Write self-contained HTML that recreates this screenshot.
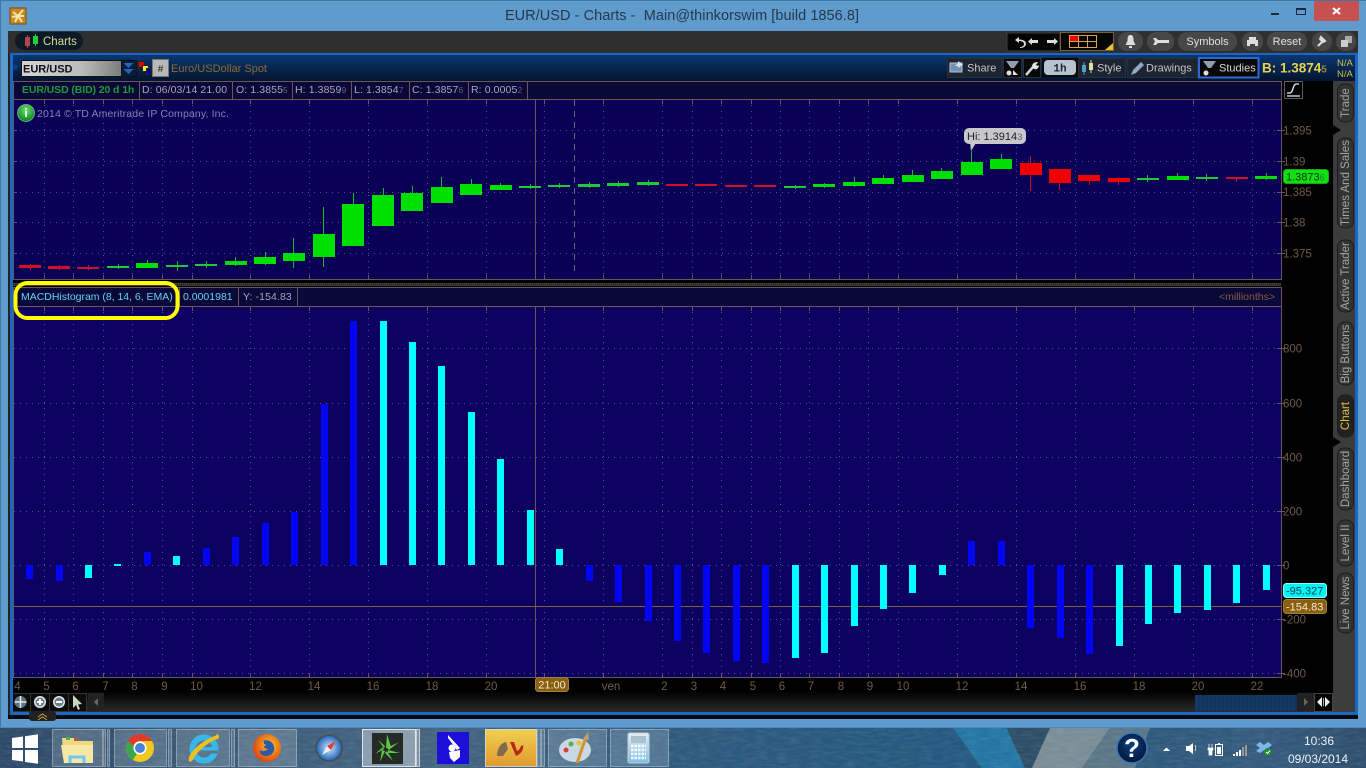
<!DOCTYPE html>
<html lang="en"><head><meta charset="utf-8"><title>EUR/USD - Charts</title>
<style>
html,body{margin:0;padding:0;background:#5f9bcd;overflow:hidden;width:1366px;height:768px}
svg{display:block;font-family:"Liberation Sans",sans-serif}
text{white-space:pre}
.ax{fill:#6e5a4a;font-size:11.5px}
.lg{fill:#a8a4c0;font-size:10.5px;letter-spacing:.1px}
.dim{fill:#66627e}
.tab{fill:#a6a6a6;font-size:11.5px;text-anchor:middle}
.b{fill:#0404f4}.c{fill:#00ffff}
.g{fill:#00e000}.gt{fill:#22c83a}.r{fill:#f00000}.rt{fill:#d01028}
.gw{stroke:#1cb828;stroke-width:1;fill:none}.rw{stroke:#c81020;stroke-width:1;fill:none}
.pill{fill:#474747}
.tbtn{fill:#fff;fill-opacity:.17;stroke:#fff;stroke-opacity:.35}
</style></head><body>
<svg width="1366" height="768" viewBox="0 0 1366 768" xmlns="http://www.w3.org/2000/svg">
<defs>
<linearGradient id="hdr" x1="0" y1="0" x2="0" y2="1"><stop offset="0" stop-color="#0b3a78"/><stop offset="1" stop-color="#04142e"/></linearGradient>
<linearGradient id="bot" x1="0" y1="0" x2="0" y2="1"><stop offset="0" stop-color="#000"/><stop offset=".35" stop-color="#000"/><stop offset="1" stop-color="#2c2c2c"/></linearGradient>
<linearGradient id="sym" x1="0" y1="0" x2="1" y2="0"><stop offset="0" stop-color="#d4d4d4"/><stop offset=".6" stop-color="#bcbcbc"/><stop offset="1" stop-color="#7c7c7c"/></linearGradient>
<linearGradient id="tbar" x1="0" y1="0" x2="1" y2="0"><stop offset="0" stop-color="#2c4a68"/><stop offset=".22" stop-color="#3e5f7c"/><stop offset=".32" stop-color="#45647e"/><stop offset=".48" stop-color="#2f5a7e"/><stop offset=".7" stop-color="#24597f"/><stop offset=".93" stop-color="#345a7c"/><stop offset="1" stop-color="#2d4d6c"/></linearGradient>
<linearGradient id="yel" x1="0" y1="0" x2="0" y2="1"><stop offset="0" stop-color="#f0cf50"/><stop offset="1" stop-color="#e09a30"/></linearGradient>
<linearGradient id="cal" x1="0" y1="0" x2="0" y2="1"><stop offset="0" stop-color="#e8eef2"/><stop offset="1" stop-color="#7cc0e8"/></linearGradient>
<radialGradient id="help" cx=".5" cy=".4" r=".6"><stop offset="0" stop-color="#0a3f80"/><stop offset="1" stop-color="#04153a"/></radialGradient>
<radialGradient id="inf" cx=".5" cy=".35" r=".6"><stop offset="0" stop-color="#70e070"/><stop offset="1" stop-color="#0a8a20"/></radialGradient>
<radialGradient id="ff" cx=".6" cy=".4" r=".6"><stop offset="0" stop-color="#f8c030"/><stop offset="1" stop-color="#e04a10"/></radialGradient>
<radialGradient id="saf" cx=".5" cy=".5" r=".5"><stop offset="0" stop-color="#d0e4f8"/><stop offset="1" stop-color="#2a6ec0"/></radialGradient>
<filter id="noise" x="0" y="0" width="100%" height="100%"><feTurbulence type="fractalNoise" baseFrequency=".09 .35" numOctaves="3" seed="4"/><feColorMatrix values="0 0 0 0 1  0 0 0 0 1  0 0 0 0 1  1.6 0 0 0 -.55"/></filter>
</defs>

<!-- window frame -->
<rect width="1366" height="768" fill="#5f9bcd"/>
<rect width="1366" height="1" fill="#3f78a8"/>
<rect y="0" width="1" height="728" fill="#3f78a8"/>
<rect x="10" y="8" width="16" height="16" fill="#c8882a" stroke="#7a4a10"/>
<path d="M18 16L13 12M18 16L23 10M18 16L24 16M18 16L22 22M18 16L15 22M18 16L12 17" stroke="#f8e8a0" stroke-width="2"/>
<text x="682" y="20" text-anchor="middle" font-size="14.5" fill="#25384c" letter-spacing=".05">EUR/USD - Charts -  Main@thinkorswim [build 1856.8]</text>
<rect x="1271" y="13" width="8" height="2" fill="#1a2a3a"/>
<rect x="1296.500" y="8.500" width="9" height="6" fill="none" stroke="#1a2a3a"/><rect x="1296" y="8" width="10" height="2" fill="#1a2a3a"/>
<rect x="1314" y="1" width="45" height="20" fill="#c75050"/>
<path d="M1333 8L1340 14M1340 8L1333 14" stroke="#fff" stroke-width="2"/>

<!-- app body -->
<rect x="8" y="31" width="1350" height="688" fill="#000"/>
<rect x="8" y="31" width="1350" height="22" fill="#2f2f2f"/>

<!-- charts pill -->
<rect x="15" y="32" width="68" height="18" rx="9" fill="#0c1a26"/>
<rect x="25" y="37" width="5" height="9" fill="#b04848"/><path d="M27.500 35V48" stroke="#b04848"/>
<rect x="33" y="36" width="5" height="8" fill="#20d040"/><path d="M35.500 34V46" stroke="#20d040"/>
<text x="43" y="45" font-size="11.5" fill="#d4d890">Charts</text>

<!-- top right toolbar -->
<rect x="1007" y="33" width="53" height="18" fill="#050505" stroke="#3a3a3a"/>
<path d="M1019 37l-4 3 4 3v-2c3 0 5 1 5 3s-2 3-4 3v1c4 0 6-2 6-4.500s-3-4-7-4z" fill="#ddd"/>
<path d="M1028 41.500l4-3.500v7z" fill="#ddd"/><rect x="1031" y="40" width="7" height="3" fill="#ddd"/>
<rect x="1047" y="40" width="7" height="3" fill="#ddd"/><path d="M1058 41.500l-4-3.500v7z" fill="#ddd"/>
<rect x="1060.500" y="32.500" width="53" height="18" fill="#050505" stroke="#7a6030"/>
<rect x="1069.500" y="35.500" width="9" height="6" fill="#f00000" stroke="#d8a050"/>
<path d="M1069.500 35.500h27v12h-27zM1078.500 35.500v12M1087.500 35.500v12M1069.500 41.500h27" fill="none" stroke="#d8a050"/>
<path d="M1113 43v7h-8z" fill="#f0c030"/>
<rect class="pill" x="1118" y="32" width="25" height="19" rx="9"/>
<path d="M1130.500 35c-3 0-3 3-3 6l-2 4h10l-2-4c0-3 0-6-3-6z" fill="#ddd"/><rect x="1129" y="46" width="3" height="2" fill="#ddd"/>
<rect class="pill" x="1147" y="32" width="27" height="19" rx="9"/>
<path d="M1153 38h3l2 2h11v3h-11l-2 2h-3l2-3.500z" fill="#ddd"/>
<rect class="pill" x="1178" y="32" width="59" height="19" rx="9"/>
<text x="1207.500" y="45" text-anchor="middle" font-size="11" fill="#e0e0e0">Symbols</text>
<rect class="pill" x="1242" y="32" width="21" height="19" rx="9"/>
<path d="M1249 37h7v3h2v6h-3v-2h-5v2h-3v-6h2z" fill="#ddd"/>
<rect class="pill" x="1267" y="32" width="40" height="19" rx="9"/>
<text x="1287" y="45" text-anchor="middle" font-size="11" fill="#e0e0e0">Reset</text>
<rect class="pill" x="1312" y="32" width="20" height="19" rx="9"/>
<path d="M1318 46l4-4M1321 37l4 4-2 1-3-3z" stroke="#ddd" stroke-width="2" fill="#ddd"/>
<rect class="pill" x="1336" y="32" width="20" height="19" rx="9"/>
<rect x="1345" y="36" width="7" height="7" fill="#aaa"/><rect x="1341" y="40" width="7" height="7" fill="#ccc"/>

<!-- header row -->
<rect x="10" y="53" width="1345" height="28" fill="url(#hdr)"/>
<rect x="10" y="53" width="1345" height="2" fill="#1a68c4"/>
<circle cx="15" cy="67" r="3" fill="#123a78"/>
<rect x="21.500" y="60.500" width="100" height="16" fill="url(#sym)" stroke="#111"/>
<text x="23" y="72.500" font-size="11" font-weight="bold" fill="#101018">EUR/USD</text>
<rect x="121.500" y="60.500" width="15" height="16" fill="#0c1c36" stroke="#111"/>
<path d="M123.500 63h10l-5 5zM123.500 69h10l-5 5z" fill="#2464c4"/>
<rect x="138.500" y="61.500" width="6" height="6" fill="#e00000" stroke="#222"/><rect x="142.500" y="65.500" width="6" height="6" fill="#f8e840" stroke="#222"/><rect x="146.500" y="68.500" width="5" height="6" fill="#0a0a90" stroke="#222"/>
<rect x="152.500" y="59.500" width="16" height="17" fill="#b8b8b8" stroke="#777"/>
<text x="160.500" y="72" text-anchor="middle" font-size="10" fill="#222">#</text>
<text x="171" y="72" font-size="11" fill="#8a6c30">Euro/USDollar Spot</text>

<rect x="947.500" y="58.500" width="54" height="19" fill="#1b2430" stroke="#2a2f38"/>
<rect x="950" y="63" width="12" height="9" fill="#7090b8" stroke="#b0c4d8"/><path d="M955 66l3-3v-2l5 3.500-5 3.500v-2h-3z" fill="#d8e0e8"/>
<text x="967" y="71.500" font-size="11" fill="#c4c4c4">Share</text>
<rect x="1003.500" y="58.500" width="18" height="19" fill="#080808" stroke="#2a2f38"/>
<path d="M1006 61h13l-5 7h-3z" fill="#8ea0b0"/><circle cx="1009" cy="73" r="2.500" fill="#e0e0e0"/><path d="M1013 70l5 5h-5z" fill="#e0e0e0"/>
<rect x="1023.500" y="58.500" width="17" height="19" fill="#080808" stroke="#2a2f38"/>
<path d="M1026 75l7-8" stroke="#c8d4de" stroke-width="2.500"/><path d="M1032 67c0-4 3-5 6-5l-2 3 2 1 1-1c0 3-2 5-5 4z" fill="#e4e4e4"/>
<rect x="1042" y="58" width="36" height="19" fill="#0a0a0a"/>
<rect x="1044" y="60" width="32" height="15" rx="4" fill="#b6c4cf"/>
<text x="1060" y="71.500" text-anchor="middle" font-size="11" font-weight="bold" fill="#20242a" font-family="Liberation Mono">1h</text>
<rect x="1078.500" y="58.500" width="47" height="19" fill="#1b2430" stroke="#2a2f38"/>
<rect x="1082" y="65" width="4" height="7" fill="#5a9cc8"/><path d="M1084 62v13" stroke="#5a9cc8"/><rect x="1089" y="63" width="4" height="7" fill="#e0e0a0"/><path d="M1091 60v13" stroke="#e0e0a0"/>
<text x="1097" y="71.500" font-size="11" fill="#c4c4c4">Style</text>
<rect x="1127.500" y="58.500" width="70" height="19" fill="#1b2430" stroke="#2a2f38"/>
<path d="M1131 75l2-5 8-8 3 3-8 8z" fill="#90a8c0"/>
<text x="1146" y="71.500" font-size="11" fill="#c4c4c4">Drawings</text>
<rect x="1199" y="58" width="59.500" height="19.500" fill="#080808" stroke="#2a6ad0" stroke-width="2"/>
<path d="M1203 61h13l-5 7h-3z" fill="#8ea0b0"/><circle cx="1206" cy="73" r="2.500" fill="#e0e0e0"/>
<text x="1219" y="71.500" font-size="11" fill="#d4d4d4">Studies</text>
<text x="1262" y="72.500" font-size="13.500" font-weight="bold" fill="#e8d050">B: 1.3874<tspan font-size="10" fill="#9a8a40">5</tspan></text>
<text x="1337" y="66" font-size="9.500" fill="#d4c040">N/A</text><text x="1337" y="77" font-size="9.500" fill="#d4c040">N/A</text>

<!-- top panel -->
<rect x="13" y="81" width="1268" height="199" fill="#0a0056"/>
<rect x="13" y="81" width="1268" height="19" fill="#0a0838"/>
<path d="M13.500 81.500H1281.500V279.500H13.500ZM13.500 99.500H1281.500M139.500 81V99M232.500 81V99M292.500 81V99M351.500 81V99M409.500 81V99M468.500 81V99M527.500 81V99" fill="none" stroke="#6c5458"/>
<text x="22" y="93" font-size="10.500" font-weight="bold" fill="#1f9a3c" letter-spacing="-.1">EUR/USD (BID) 20 d 1h</text>
<text class="lg" x="142" y="93">D: 06/03/14 21.00</text>
<text class="lg" x="236" y="93">O: 1.3855<tspan class="dim" font-size="8.500">5</tspan></text>
<text class="lg" x="295" y="93">H: 1.3859<tspan class="dim" font-size="8.500">9</tspan></text>
<text class="lg" x="354" y="93">L: 1.3854<tspan class="dim" font-size="8.500">7</tspan></text>
<text class="lg" x="412" y="93">C: 1.3857<tspan class="dim" font-size="8.500">6</tspan></text>
<text class="lg" x="471" y="93">R: 0.0005<tspan class="dim" font-size="8.500">2</tspan></text>
<!-- grids top -->
<path d="M44.500 105V275M73.500 105V275M103.500 105V275M132.500 105V275M162.500 105V275M192.500 105V275M250.500 105V275M309.500 105V275M368.500 105V275M427.500 105V275M486.500 105V275M544.500 105V275M603.500 105V275M662.500 105V275M692.500 105V275M721.500 105V275M751.500 105V275M780.500 105V275M809.500 105V275M839.500 105V275M868.500 105V275M898.500 105V275M957.500 105V275M1016.500 105V275M1075.500 105V275M1134.500 105V275M1193.500 105V275M1252.500 105V275" stroke="#5c5080" stroke-dasharray="1 5" fill="none"/>
<path d="M14 130.500H1281M14 161.500H1281M14 192.500H1281M14 222.500H1281M14 253.500H1281" stroke="#5c5080" stroke-dasharray="1 5" fill="none"/>
<path d="M44.500 100v4M73.500 100v4M103.500 100v4M132.500 100v4M162.500 100v4M192.500 100v4M250.500 100v4M309.500 100v4M368.500 100v4M427.500 100v4M486.500 100v4M544.500 100v4M603.500 100v4M662.500 100v4M692.500 100v4M721.500 100v4M751.500 100v4M780.500 100v4M809.500 100v4M839.500 100v4M868.500 100v4M898.500 100v4M957.500 100v4M1016.500 100v4M1075.500 100v4M1134.500 100v4M1193.500 100v4M1252.500 100v4M44.500 275v4M73.500 275v4M103.500 275v4M132.500 275v4M162.500 275v4M192.500 275v4M250.500 275v4M309.500 275v4M368.500 275v4M427.500 275v4M486.500 275v4M544.500 275v4M603.500 275v4M662.500 275v4M692.500 275v4M721.500 275v4M751.500 275v4M780.500 275v4M809.500 275v4M839.500 275v4M868.500 275v4M898.500 275v4M957.500 275v4M1016.500 275v4M1075.500 275v4M1134.500 275v4M1193.500 275v4M1252.500 275v4M13 130.500h4M13 161.500h4M13 192.500h4M13 222.500h4M13 253.500h4M1277 130.500h8M1277 161.500h8M1277 192.500h8M1277 222.500h8M1277 253.500h8" stroke="#6c5458" fill="none"/>
<path d="M535.500 100V279" stroke="#6c5458"/>
<path d="M574.500 100V275" stroke="#6a6a80" stroke-dasharray="6 5"/>
<circle cx="26" cy="113" r="8.500" fill="url(#inf)" stroke="#d8f0d8" stroke-opacity=".5"/>
<text x="26" y="117" text-anchor="middle" font-size="12" font-weight="bold" fill="#fff">i</text>
<text x="37" y="117" font-size="10.500" fill="#8484b4" letter-spacing=".14">2014 © TD Ameritrade IP Company, Inc.</text>
<!-- candles -->
<path class="rw" d="M30.500 264V270M59.500 265V270M88.500 265V270"/>
<rect class="rt" x="19" y="265" width="22" height="3"/><rect class="rt" x="48" y="266" width="22" height="3"/><rect class="rt" x="77" y="267" width="22" height="2"/>
<path class="gw" d="M118.500 264V269M147.500 260V268M177.500 261V271M206.500 261V268M235.500 257V266M265.500 252V265M293.500 238V268M323.500 207V267M353.500 193V246M383.500 188V226M412.500 186V211M441.500 177V203M471.500 179V195M500.500 183V190M530.500 184V189M559.500 183V188M589.500 182V188M618.500 181V187M648.500 180V186M795.500 185V189M824.500 183V188M854.500 177V187M883.500 175V184M912.500 170V182M941.500 168V179M971.500 151V175M1001.500 154V169M1147.500 175V182M1177.500 173V180M1206.500 174V181M1266.500 173V180"/>
<rect class="gt" x="107" y="266" width="22" height="2"/><rect class="g" x="136" y="263" width="22" height="5"/>
<rect class="gt" x="166" y="265" width="22" height="2"/><rect class="gt" x="195" y="264" width="22" height="2"/>
<rect class="g" x="225" y="261" width="22" height="4"/><rect class="g" x="254" y="257" width="22" height="7"/>
<rect class="g" x="283" y="253" width="22" height="8"/><rect class="g" x="313" y="234" width="22" height="23"/>
<rect class="g" x="342" y="204" width="22" height="42"/><rect class="g" x="372" y="195" width="22" height="31"/>
<rect class="g" x="401" y="193" width="22" height="18"/><rect class="g" x="431" y="187" width="22" height="16"/>
<rect class="g" x="460" y="184" width="22" height="11"/><rect class="g" x="490" y="185" width="22" height="5"/>
<rect class="gt" x="519" y="186" width="22" height="2"/><rect class="gt" x="548" y="185" width="22" height="2"/>
<rect class="gt" x="578" y="184" width="22" height="3"/><rect class="gt" x="607" y="183" width="22" height="3"/>
<rect class="gt" x="637" y="182" width="22" height="3"/>
<rect class="rt" x="666" y="184" width="22" height="2"/><rect class="rt" x="695" y="184" width="22" height="2"/>
<rect class="rt" x="725" y="185" width="22" height="2"/><rect class="rt" x="754" y="185" width="22" height="2"/>
<rect class="gt" x="784" y="186" width="22" height="2"/><rect class="g" x="813" y="184" width="22" height="3"/>
<rect class="g" x="843" y="182" width="22" height="4"/><rect class="g" x="872" y="178" width="22" height="6"/>
<rect class="g" x="902" y="175" width="22" height="7"/><rect class="g" x="931" y="171" width="22" height="8"/>
<rect class="g" x="961" y="162" width="22" height="13"/><rect class="g" x="990" y="159" width="22" height="10"/>
<path class="rw" d="M1030.500 156V191M1059.500 183V190M1089.500 181V185M1118.500 182V185M1236.500 179V182"/>
<rect class="r" x="1020" y="163" width="22" height="12"/><rect class="r" x="1049" y="169" width="22" height="14"/>
<rect class="r" x="1078" y="175" width="22" height="6"/><rect class="r" x="1108" y="178" width="22" height="4"/>
<rect class="gt" x="1137" y="178" width="22" height="2"/><rect class="g" x="1167" y="176" width="22" height="4"/>
<rect class="gt" x="1196" y="177" width="22" height="2"/><rect class="rt" x="1226" y="177" width="22" height="2"/>
<rect class="g" x="1255" y="176" width="22" height="3"/>
<!-- Hi tooltip -->
<path d="M970 142l1 9 5-8z" fill="#c8c8cc"/>
<rect x="964" y="128" width="62" height="16" rx="5" fill="#c8c8cc"/>
<text x="967" y="140" font-size="11" fill="#202028">Hi: 1.3914<tspan font-size="9.500" fill="#666">3</tspan></text>
<!-- right axis top -->
<rect x="1284.500" y="81.500" width="18" height="17" fill="#000" stroke="#5a5a5a"/>
<path d="M1287 93h3c3 0 3-9 6-9h3M1287 96h13" stroke="#e8f0ff" stroke-width="1.300" fill="none"/>
<text class="ax" x="1283" y="134.500">1.395</text><text class="ax" x="1283" y="165.500">1.39</text><text class="ax" x="1283" y="196">1.385</text><text class="ax" x="1283" y="226.500">1.38</text><text class="ax" x="1283" y="257.500">1.375</text>
<rect x="1283.500" y="169.500" width="45" height="14" rx="3" fill="#0fe00f" stroke="#20a020"/>
<text x="1286" y="180.500" font-size="11" fill="#0a3010">1.3873<tspan font-size="9" fill="#208030">6</tspan></text>

<!-- separator -->
<rect x="13" y="283" width="1268" height="3" fill="#3e3e3e"/>
<path d="M13 284.500H1281" stroke="#111" stroke-dasharray="1 1"/>

<!-- lower panel -->
<rect x="13" y="287" width="1268" height="390" fill="#0c0060"/>
<rect x="13" y="287" width="1268" height="20" fill="#0a0838"/>
<path d="M13.500 287.500H1281.500V677.500H13.500ZM13.500 306.500H1281.500M179.500 287V306M238.500 287V306M297.500 287V306" fill="none" stroke="#6c5458"/>
<text x="21" y="300" font-size="10.500" fill="#62d2f4" letter-spacing="-.02">MACDHistogram (8, 14, 6, EMA)</text>
<text x="183" y="300" font-size="10.500" fill="#62d2f4">0.0001981</text>
<text class="lg" x="243" y="300">Y: -154.83</text>
<text x="1275" y="300" text-anchor="end" font-size="10.500" fill="#8a5a40">&lt;millionths&gt;</text>
<path d="M44.500 312V672M73.500 312V672M103.500 312V672M132.500 312V672M162.500 312V672M192.500 312V672M250.500 312V672M309.500 312V672M368.500 312V672M427.500 312V672M486.500 312V672M544.500 312V672M603.500 312V672M662.500 312V672M692.500 312V672M721.500 312V672M751.500 312V672M780.500 312V672M809.500 312V672M839.500 312V672M868.500 312V672M898.500 312V672M957.500 312V672M1016.500 312V672M1075.500 312V672M1134.500 312V672M1193.500 312V672M1252.500 312V672" stroke="#5c5080" stroke-dasharray="1 5" fill="none"/>
<path d="M14 348.500H1281M14 403.500H1281M14 457.500H1281M14 511.500H1281M14 565.500H1281M14 619.500H1281M14 673.500H1281" stroke="#5c5080" stroke-dasharray="1 5" fill="none"/>
<path d="M44.500 307v4M73.500 307v4M103.500 307v4M132.500 307v4M162.500 307v4M192.500 307v4M250.500 307v4M309.500 307v4M368.500 307v4M427.500 307v4M486.500 307v4M544.500 307v4M603.500 307v4M662.500 307v4M692.500 307v4M721.500 307v4M751.500 307v4M780.500 307v4M809.500 307v4M839.500 307v4M868.500 307v4M898.500 307v4M957.500 307v4M1016.500 307v4M1075.500 307v4M1134.500 307v4M1193.500 307v4M1252.500 307v4M44.500 673v4M73.500 673v4M103.500 673v4M132.500 673v4M162.500 673v4M192.500 673v4M250.500 673v4M309.500 673v4M368.500 673v4M427.500 673v4M486.500 673v4M544.500 673v4M603.500 673v4M662.500 673v4M692.500 673v4M721.500 673v4M751.500 673v4M780.500 673v4M809.500 673v4M839.500 673v4M868.500 673v4M898.500 673v4M957.500 673v4M1016.500 673v4M1075.500 673v4M1134.500 673v4M1193.500 673v4M1252.500 673v4M1277 348.500h8M1277 403.500h8M1277 457.500h8M1277 511.500h8M1277 565.500h8M1277 619.500h8M1277 673.500h8" stroke="#6c5458" fill="none"/>
<path d="M535.500 307V677" stroke="#6c5458"/>
<path d="M13 606.500H1281" stroke="#7a5c40"/>
<!-- histogram -->
<rect class="b" x="26" y="565" width="7" height="14"/><rect class="b" x="56" y="565" width="7" height="16"/>
<rect class="c" x="85" y="565" width="7" height="13"/><rect class="c" x="114" y="564" width="7" height="2"/>
<rect class="b" x="144" y="552" width="7" height="13"/><rect class="c" x="173" y="556" width="7" height="9"/>
<rect class="b" x="203" y="548" width="7" height="17"/><rect class="b" x="232" y="537" width="7" height="28"/>
<rect class="b" x="262" y="523" width="7" height="42"/><rect class="b" x="291" y="512" width="7" height="53"/>
<rect class="b" x="321" y="404" width="7" height="161"/><rect class="b" x="350" y="321" width="7" height="244"/>
<rect class="c" x="380" y="321" width="7" height="244"/><rect class="c" x="409" y="342" width="7" height="223"/>
<rect class="c" x="438" y="366" width="7" height="199"/><rect class="c" x="468" y="412" width="7" height="153"/>
<rect class="c" x="497" y="459" width="7" height="106"/><rect class="c" x="527" y="510" width="7" height="55"/>
<rect class="c" x="556" y="549" width="7" height="16"/>
<rect class="b" x="586" y="565" width="7" height="16"/><rect class="b" x="615" y="565" width="7" height="37"/>
<rect class="b" x="645" y="565" width="7" height="56"/><rect class="b" x="674" y="565" width="7" height="76"/>
<rect class="b" x="703" y="565" width="7" height="88"/><rect class="b" x="733" y="565" width="7" height="96"/>
<rect class="b" x="762" y="565" width="7" height="98"/>
<rect class="c" x="792" y="565" width="7" height="93"/><rect class="c" x="821" y="565" width="7" height="88"/>
<rect class="c" x="851" y="565" width="7" height="61"/><rect class="c" x="880" y="565" width="7" height="44"/>
<rect class="c" x="909" y="565" width="7" height="28"/><rect class="c" x="939" y="565" width="7" height="10"/>
<rect class="b" x="968" y="541" width="7" height="24"/><rect class="b" x="998" y="541" width="7" height="24"/>
<rect class="b" x="1027" y="565" width="7" height="63"/><rect class="b" x="1057" y="565" width="7" height="73"/>
<rect class="b" x="1086" y="565" width="7" height="89"/>
<rect class="c" x="1116" y="565" width="7" height="81"/><rect class="c" x="1145" y="565" width="7" height="59"/>
<rect class="c" x="1174" y="565" width="7" height="48"/><rect class="c" x="1204" y="565" width="7" height="45"/>
<rect class="c" x="1233" y="565" width="7" height="38"/><rect class="c" x="1263" y="565" width="7" height="25"/>
<!-- axis labels lower -->
<text class="ax" x="1283" y="352.500">800</text><text class="ax" x="1283" y="407.500">600</text><text class="ax" x="1283" y="461.500">400</text><text class="ax" x="1283" y="515.500">200</text><text class="ax" x="1283" y="569.500">0</text><text class="ax" x="1283" y="623.500">-200</text><text class="ax" x="1283" y="677.500">-400</text>
<rect x="1283.500" y="583.500" width="43" height="14" rx="3" fill="#00f4f4" stroke="#80ffff"/>
<text x="1286" y="594.500" font-size="11" fill="#084058">-95.327</text>
<rect x="1283.500" y="599.500" width="43" height="14" rx="3" fill="#8a6010" stroke="#a08040"/>
<text x="1286" y="610.500" font-size="11" fill="#f4e8d0">-154.83</text>

<!-- bottom area -->
<rect x="10" y="680" width="1323" height="32" fill="url(#bot)"/>
<g class="ax" text-anchor="middle">
<text x="17.500" y="690">4</text><text x="46.500" y="690">5</text><text x="75.500" y="690">6</text><text x="105.500" y="690">7</text><text x="134.500" y="690">8</text><text x="164.500" y="690">9</text><text x="196.500" y="690">10</text><text x="255.500" y="690">12</text><text x="314" y="690">14</text><text x="373" y="690">16</text><text x="432" y="690">18</text><text x="491" y="690">20</text><text x="611" y="690">ven</text><text x="664.500" y="690">2</text><text x="694" y="690">3</text><text x="723" y="690">4</text><text x="753" y="690">5</text><text x="782" y="690">6</text><text x="811" y="690">7</text><text x="841" y="690">8</text><text x="870" y="690">9</text><text x="903" y="690">10</text><text x="962" y="690">12</text><text x="1021" y="690">14</text><text x="1080" y="690">16</text><text x="1139" y="690">18</text><text x="1198" y="690">20</text><text x="1257" y="690">22</text>
</g>
<rect x="535.500" y="677.500" width="33" height="14" rx="3" fill="#8a6010" stroke="#a08040"/>
<text x="552" y="688.500" text-anchor="middle" font-size="11" fill="#f4e8d0">21:00</text>

<!-- bottom controls -->
<rect x="11.500" y="693.500" width="75" height="18" fill="#0c0c0c" stroke="#333"/>
<path d="M30.500 694V711M49.500 694V711M68.500 694V711" stroke="#333"/>
<circle cx="20.500" cy="702" r="6" fill="#5a7484"/><path d="M20.500 696V708M14.500 702H26.500" stroke="#e8e8e8" stroke-width="1.500"/>
<circle cx="40" cy="702" r="6" fill="#e0e8ee"/><circle cx="40" cy="702" r="4.500" fill="#6a8090"/><path d="M40 699V705M37 702H43" stroke="#fff" stroke-width="2"/>
<circle cx="59" cy="702" r="6" fill="#e0e8ee"/><circle cx="59" cy="702" r="4.500" fill="#6a8090"/><path d="M56 702H62" stroke="#fff" stroke-width="2"/>
<path d="M73 695l9 9-4 .5 2 4.500-2 1-2-5-3 3z" fill="#c8d8c0"/>
<rect x="88" y="693" width="16" height="18" fill="#222"/><path d="M98 698v8l-4-4z" fill="#666"/>
<rect x="1195" y="695" width="102" height="16" fill="#12355e"/>
<path d="M1197 695v16M1201 695v16M1205 695v16M1209 695v16M1213 695v16M1217 695v16M1221 695v16M1225 695v16M1229 695v16M1233 695v16M1237 695v16M1241 695v16M1245 695v16M1249 695v16M1253 695v16M1257 695v16M1261 695v16M1265 695v16M1269 695v16M1273 695v16M1277 695v16M1281 695v16M1285 695v16M1289 695v16M1293 695v16" stroke="#1a4474" stroke-opacity=".6"/>
<rect x="1297" y="693" width="17" height="18" fill="#222"/><path d="M1304 698v8l4-4z" fill="#666"/>
<rect x="1314.500" y="693.500" width="18" height="18" fill="#050505" stroke="#444"/>
<path d="M1322 697v10l-5-5zM1325 697v10l5-5z" fill="#e8f0e8"/><rect x="1323" y="698" width="1" height="8" fill="#aaa"/>

<!-- window borders -->
<rect x="8" y="53" width="2" height="666" fill="#222"/>
<rect x="10" y="53" width="3" height="660" fill="#1a68c4"/>
<rect x="10" y="712" width="1348" height="3" fill="#1a68c4"/>
<rect x="8" y="715" width="1350" height="4" fill="#0a0a0a"/>
<rect x="29" y="711" width="27" height="10" rx="3" fill="#222"/>
<path d="M38 717l4.500-3 4.500 3M38 720l4.500-3 4.500 3" stroke="#c8a040" fill="none"/>

<!-- right tabs -->
<rect x="1333" y="81" width="22" height="631" fill="#3c3c3c"/>
<rect x="1355" y="53" width="3" height="662" fill="#1a68c4"/>
<g fill="#333" stroke="#1c1c1c">
<rect x="1337.500" y="84" width="16" height="38" rx="7"/>
<rect x="1337.500" y="138" width="16" height="90" rx="7"/>
<rect x="1337.500" y="240" width="16" height="72" rx="7"/>
<rect x="1337.500" y="322" width="16" height="63" rx="7"/>
<rect x="1337.500" y="395" width="16" height="42" rx="7" fill="#222"/>
<rect x="1337.500" y="448" width="16" height="62" rx="7"/>
<rect x="1337.500" y="520" width="16" height="46" rx="7"/>
<rect x="1337.500" y="573" width="16" height="60" rx="7"/>
</g>
<path d="M1333 125l8 5-8 5zM1333 437l8 5-8 5z" fill="#000"/>
<text class="tab" transform="translate(1349,103) rotate(-90)">Trade</text>
<text class="tab" transform="translate(1349,183) rotate(-90)">Times And Sales</text>
<text class="tab" transform="translate(1349,276) rotate(-90)">Active Trader</text>
<text class="tab" transform="translate(1349,354) rotate(-90)">Big Buttons</text>
<text class="tab" style="fill:#e0c040" transform="translate(1349,416) rotate(-90)">Chart</text>
<text class="tab" transform="translate(1349,479) rotate(-90)">Dashboard</text>
<text class="tab" transform="translate(1349,543) rotate(-90)">Level II</text>
<text class="tab" transform="translate(1349,603) rotate(-90)">Live News</text>

<!-- yellow annotation -->
<rect x="15.500" y="283" width="162" height="35" rx="12" fill="none" stroke="#ffff00" stroke-width="4"/>

<!-- taskbar -->
<rect y="727" width="1366" height="41" fill="url(#tbar)"/>
<path d="M953 728H1008L1025 768H982Z" fill="#2376a4"/>
<path d="M1007 728H1050L1032 768H1025L1014 745Z" fill="#2d4e66"/>
<path d="M1050 728H1110L1082 768H1032Z" fill="#7a8c96"/>
<path d="M1110 728H1150L1135 768H1082Z" fill="#5a7688"/>
<rect y="728" width="1366" height="40" filter="url(#noise)" opacity=".1"/>
<rect y="727" width="1366" height="1" fill="#4a86b8"/>
<path d="M12 738l11-1.500V748H12zM25 736.200l13-2V748H25zM12 750h11v11.500L12 760zM25 750h13v13.800L25 762z" fill="#fff"/>

<rect class="tbtn" x="52.500" y="729.500" width="50" height="37"/><rect class="tbtn" x="103.500" y="729.500" width="2" height="37"/><rect class="tbtn" x="107.500" y="729.500" width="2" height="37"/>
<path d="M62 738h14l2 3h15v22H64z" fill="#f0d880"/><path d="M61 745h32v18H64z" fill="#f8e8a8"/><rect x="66" y="737" width="4" height="3" fill="#50b050"/><rect x="74" y="738" width="4" height="3" fill="#c05040"/><path d="M70 763v-6h14v6" stroke="#70c8f0" stroke-width="3" fill="none"/>

<rect class="tbtn" x="114.500" y="729.500" width="52" height="37"/><rect class="tbtn" x="168.500" y="729.500" width="3" height="37"/>
<circle cx="140" cy="748" r="14" fill="#f0c820"/><path d="M140 734a14 14 0 0 0-12.100 7l6.500 11.200A7 7 0 0 1 140 741h12.100A14 14 0 0 0 140 734z" fill="#dd3a30"/><path d="M127.900 741A14 14 0 0 0 133 760.100l6.500-11.200-5.100-2.900z" fill="#3aa84a"/><circle cx="140" cy="748" r="6.500" fill="#fff"/><circle cx="140" cy="748" r="5" fill="#4a80d8"/>

<rect class="tbtn" x="176.500" y="729.500" width="53" height="37"/><rect class="tbtn" x="231.500" y="729.500" width="3" height="37"/>
<circle cx="204" cy="749" r="11.500" fill="none" stroke="#38b8e8" stroke-width="6"/><rect x="197" y="747" width="16" height="3.500" fill="#38b8e8"/><rect x="210" y="750.500" width="8" height="3" fill="#5a788c"/>
<path d="M190 762c-5-3 4-18 27-27-4-2 5-1 1 4-10 2-24 16-25 21z" fill="#f0c020"/>

<rect class="tbtn" x="238.500" y="729.500" width="58" height="37"/>
<circle cx="267" cy="748" r="14" fill="url(#ff)"/><path d="M263 741c4-2 10 0 11 6 1 5-3 9-8 9-4 0-7-3-6-6 3 2 6 1 8-1-3 0-4-2-4-3 3 0 2-2 0-2 0-2 0-3-1-3z" fill="#2a5aa8"/>

<circle cx="329" cy="748" r="14" fill="#444" fill-opacity=".6"/><circle cx="329" cy="748" r="12" fill="url(#saf)"/>
<path d="M336 741l-5 9-9 5 5-9z" fill="#e8f0f8"/><path d="M336 741l-5 9-4-4z" fill="#d84030"/>

<rect x="362.500" y="729.500" width="53" height="37" fill="#fff" fill-opacity=".38" stroke="#fff" stroke-opacity=".8"/><rect x="416.500" y="729.500" width="3" height="37" fill="#fff" fill-opacity=".3" stroke="#fff" stroke-opacity=".6"/>
<rect x="372" y="733" width="31" height="31" fill="#262a26"/>
<path d="M386 748l1-14 4 13zM387 748l12-6-10 8zM388 750l12 3-12 0zM387 751l6 10-8-8zM385 751l-5 11 2-12zM384 749l-9 5 8-7zM384 748l-6-8 7 6z" fill="#58c848"/>

<rect x="437" y="732" width="32" height="32" fill="#1c10d8"/>
<path d="M448 735l12 13-3 2-9-12z" fill="#fff"/><circle cx="452" cy="748" r="3.500" fill="#fff"/><path d="M449 752l11-2v7l-6 5-4-4z" fill="#fff"/>

<rect x="485.500" y="729.500" width="51" height="37" fill="url(#yel)" stroke="#fff" stroke-opacity=".6"/><rect class="tbtn" x="537.500" y="729.500" width="3" height="37"/><rect class="tbtn" x="541.500" y="729.500" width="3" height="37"/>
<path d="M497 756c0-8 4-13 9-14l2 7-5 7z" fill="#806a50"/><path d="M510 742l6 14c5-2 8-6 7-11l-2 1c-1 3-3 5-4 5l-3-9z" fill="#b82818"/>

<rect class="tbtn" x="548.500" y="729.500" width="58" height="37"/>
<ellipse cx="575" cy="750" rx="16" ry="12" fill="#c8d8e4"/><circle cx="566" cy="750" r="2.500" fill="#d84040"/><circle cx="571" cy="744" r="2.500" fill="#60b040"/><circle cx="579" cy="743" r="2.500" fill="#e8c030"/>
<path d="M577 763l9-26" stroke="#d89030" stroke-width="3"/><path d="M583 739l5-7 1 8z" fill="#c0a070"/>

<rect class="tbtn" x="610.500" y="729.500" width="58" height="37"/>
<rect x="628" y="733" width="21" height="30" rx="2" fill="url(#cal)" stroke="#c0d0d8"/><rect x="631" y="736" width="15" height="7" fill="#a8c0d0"/>
<path d="M631 746h15M631 750h15M631 754h15M631 758h15" stroke="#f4f8fa" stroke-width="2.500" stroke-dasharray="2.500 1"/>

<!-- tray -->
<circle cx="1132" cy="748" r="15" fill="url(#help)" stroke="#3a78b8" stroke-width="1.500"/>
<text x="1132" y="757" text-anchor="middle" font-size="26" font-weight="bold" fill="#fff">?</text>
<path d="M1163 751l3.500-3.500 3.500 3.500z" fill="#fff"/>
<path d="M1186 746h3l4-3v11l-4-3h-3z" fill="#fff"/><path d="M1195 745c1 2 1 4 0 6" stroke="#ccc" fill="none"/>
<path d="M1209 744v4M1212 744v4M1208 748h5v2h-1v5h-3v-5h-1z" stroke="#fff" fill="#fff" stroke-width=".7"/>
<rect x="1215.500" y="744.500" width="7" height="11" fill="none" stroke="#fff"/><rect x="1217" y="747" width="4" height="7" fill="#fff"/><rect x="1218" y="743" width="2" height="1" fill="#fff"/>
<path d="M1233 754h2v2h-2zM1236 752h2v4h-2zM1239 750h2v6h-2z" fill="#fff"/><path d="M1242 747h2v9h-2zM1245 745h2v11h-2z" fill="#999"/>
<path d="M1256 745l4-3 4 3 4-3 4 3-4 3 4 3-4 2-4-3-4 3-4-2 4-3z" fill="#7cb8e8"/>
<circle cx="1268" cy="752" r="4" fill="#208838"/><path d="M1266 752l1.500 1.500 2.500-3" stroke="#fff" fill="none"/>
<text x="1319" y="745" text-anchor="middle" font-size="12" fill="#eef2f6">10:36</text>
<text x="1318" y="763" text-anchor="middle" font-size="12" fill="#eef2f6">09/03/2014</text>
</svg>
</body></html>
